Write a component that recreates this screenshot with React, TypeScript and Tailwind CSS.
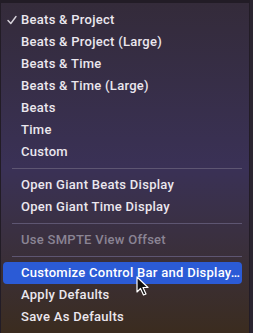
import { Fragment } from "react";

type Item = {
    label: string;
    checked?: boolean;
    disabled?: boolean;
    active?: boolean;
};

const groups: Item[][] = [
    [
        { label: "Beats & Project", checked: true },
        { label: "Beats & Project (Large)" },
        { label: "Beats & Time" },
        { label: "Beats & Time (Large)" },
        { label: "Beats" },
        { label: "Time" },
        { label: "Custom" },
    ],
    [
        { label: "Open Giant Beats Display" },
        { label: "Open Giant Time Display" },
    ],
    [{ label: "Use SMPTE View Offset", disabled: true }],
    [
        { label: "Customize Control Bar and Display…", active: true },
        { label: "Apply Defaults" },
        { label: "Save As Defaults" },
    ],
];

function Check() {
    return (
        <svg width="10" height="10" viewBox="0 0 10 10" className="absolute left-[4px] top-[6px]">
            <path d="M1 5.5 L3.8 8.5 L9 1.5" fill="none" stroke="#d8d4dc" strokeWidth="1.4" strokeLinecap="round" strokeLinejoin="round" />
        </svg>
    );
}

function Cursor() {
    return (
        <svg
            width="14"
            height="20"
            viewBox="0 0 14 20"
            className="absolute left-[133px] top-[14px]"
        >
            <path
                d="M1 1 L1 16 L4.5 12.5 L7.5 19 L10 18 L7 11.5 L12 11.5 Z"
                fill="#111"
                stroke="#fff"
                strokeWidth="1.2"
                strokeLinejoin="round"
            />
        </svg>
    );
}

export default function App() {
    return (
        <div className="w-[253px] h-[333px] bg-[#2a2430] overflow-hidden">
            <div className="h-[333px] w-[250px] border-t-[3px] border-l border-r border-[#221c26] bg-gradient-to-b from-[#342b3a] via-[#3a3156] to-[#3b2c1f] pt-[6px] font-['Roboto',sans-serif] text-[13px] font-medium tracking-[0.28px]">
                {groups.map((group, gi) => (
                    <Fragment key={gi}>
                        {gi > 0 && (
                            <div className="mx-[11px] my-[5px] h-px w-[230px] bg-[#5e5672]" />
                        )}
                        {group.map((item) => (
                            <div
                                key={item.label}
                                className={
                                    item.active
                                        ? "relative ml-[2px] mr-[7px] flex h-[22px] items-center whitespace-nowrap rounded-[4px] bg-[#2b5bd6] pl-[18px] text-white"
                                        : "relative ml-[2px] mr-[7px] flex h-[22px] items-center whitespace-nowrap pl-[18px] " +
                                          (item.disabled ? "text-[#8a8494]" : "text-[#ebe7ee]")
                                }
                            >
                                {item.checked && <Check />}
                                {item.label}
                                {item.active && <Cursor />}
                            </div>
                        ))}
                    </Fragment>
                ))}
            </div>
        </div>
    );
}
